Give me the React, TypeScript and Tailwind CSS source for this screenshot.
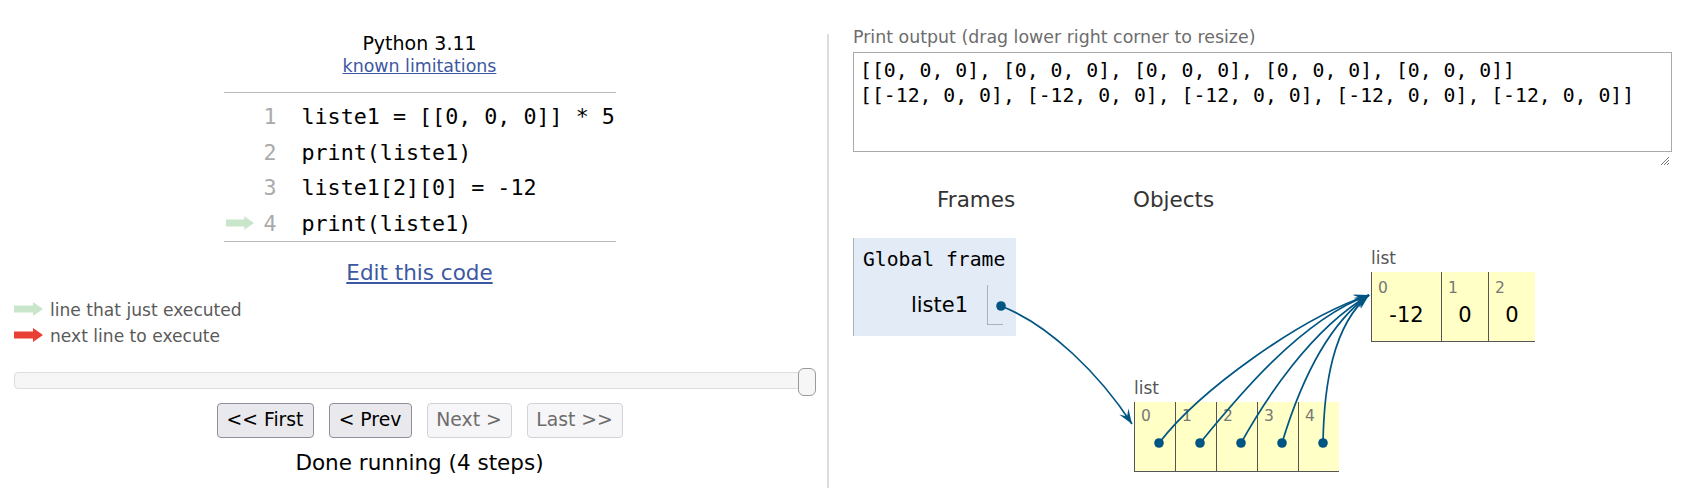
import React from "react";

type P = [number, number];

function headPath(p2: P, p3: P, L = 15, W = 11, fold = 0.6) {
  const dx = p3[0] - p2[0];
  const dy = p3[1] - p2[1];
  const len = Math.hypot(dx, dy);
  const ux = dx / len;
  const uy = dy / len;
  const nx = -uy;
  const ny = ux;
  const bx = p3[0] - L * ux;
  const by = p3[1] - L * uy;
  const w1 = [bx + (nx * W) / 2, by + (ny * W) / 2];
  const w2 = [bx - (nx * W) / 2, by - (ny * W) / 2];
  const f = [p3[0] - L * fold * ux, p3[1] - L * fold * uy];
  return `M${p3[0]},${p3[1]} L${w1[0]},${w1[1]} L${f[0]},${f[1]} L${w2[0]},${w2[1]} Z`;
}

const curves: { p0: P; p1: P; p2: P; p3: P }[] = [
  { p0: [1001, 306], p1: [1050, 325], p2: [1100, 375], p3: [1132, 424] },
  { p0: [1159, 443], p1: [1200, 390], p2: [1300, 318], p3: [1369, 295] },
  { p0: [1200, 443], p1: [1235, 400], p2: [1300, 320], p3: [1369, 295] },
  { p0: [1241, 443], p1: [1265, 400], p2: [1310, 330], p3: [1369, 295] },
  { p0: [1282, 443], p1: [1295, 400], p2: [1320, 330], p3: [1369, 295] },
  { p0: [1323, 443], p1: [1324, 385], p2: [1333, 325], p3: [1369, 295] },
];

const dots: P[] = [
  [1001, 306],
  [1159, 443],
  [1200, 443],
  [1241, 443],
  [1282, 443],
  [1323, 443],
];

function ExecArrow({ color }: { color: string }) {
  return (
    <svg width="29" height="14" viewBox="0 0 29 14" className="block">
      <path d="M0 3.5H19V0L29 7L19 14V10.5H0Z" fill={color} />
    </svg>
  );
}

const codeLines = [
  "liste1 = [[0, 0, 0]] * 5",
  "print(liste1)",
  "liste1[2][0] = -12",
  "print(liste1)",
];

export default function App() {
  return (
    <div className="relative w-[1694px] h-[488px] overflow-hidden bg-white flex font-['DejaVu_Sans',Verdana,sans-serif] text-black">
      {/* Left panel */}
      <div className="w-[827px] pl-[14px] pr-[2px] flex flex-col items-center pt-[32px]">
        <div className="text-[19px] leading-[22px] text-black">Python 3.11</div>
        <div className="mt-[2px] text-[17.4px] leading-[20px] text-[#3d58a2] underline">known limitations</div>

        <div className="mt-[16px] w-[392px] border-t border-b border-[#bbbbbb] pt-[6px]">
          {codeLines.map((line, i) => (
            <div key={i} className="flex items-center h-[35.5px]">
              <div className="w-[30px] pl-[2px] flex items-center">
                {i === 3 ? <ExecArrow color="#c9e6ca" /> : null}
              </div>
              <div className="w-[23px] text-right font-['DejaVu_Sans_Mono',monospace] text-[21.7px] leading-[35.5px] text-[#aaaaaa]">
                {i + 1}
              </div>
              <div className="pl-[25px] font-['DejaVu_Sans_Mono',monospace] text-[21.7px] leading-[35.5px] text-black whitespace-pre">
                {line}
              </div>
            </div>
          ))}
        </div>

        <div className="mt-[18px] text-[21.5px] leading-[25px] text-[#3d58a2] underline">Edit this code</div>

        <div className="self-start mt-[12px] text-[17.1px] leading-[26px] text-[#5a5a5a]">
          <div className="flex items-center gap-[7px]">
            <div className="-mt-[2px]">
              <ExecArrow color="#c9e6ca" />
            </div>
            <span>line that just executed</span>
          </div>
          <div className="flex items-center gap-[7px]">
            <div className="-mt-[2px]">
              <ExecArrow color="#e93f34" />
            </div>
            <span>next line to execute</span>
          </div>
        </div>

        <div className="self-start relative w-[802px] h-[28px] mt-[19px] pt-[4px]">
          <div className="h-[17px] rounded-[4px] border border-[#dddddd] bg-[#f6f6f6]" />
          <div className="absolute right-0 top-0 w-[18px] h-[28px] rounded-[6px] border border-[#9a9a9a] bg-[#f6f6f6]" />
        </div>

        <div className="mt-[7px] flex gap-[15px] text-[18.8px]">
          <div className="w-[97px] h-[35px] flex items-center justify-center rounded-[4px] border border-[#8f8f9d] bg-[#e9e9ed] text-black">
            &lt;&lt; First
          </div>
          <div className="w-[83px] h-[35px] flex items-center justify-center rounded-[4px] border border-[#8f8f9d] bg-[#e9e9ed] text-black">
            &lt; Prev
          </div>
          <div className="w-[85px] h-[35px] flex items-center justify-center rounded-[4px] border border-[#d2d2d8] bg-[#f6f6f8] text-[#6d6d6d]">
            Next &gt;
          </div>
          <div className="w-[96px] h-[35px] flex items-center justify-center rounded-[4px] border border-[#d2d2d8] bg-[#f6f6f8] text-[#6d6d6d]">
            Last &gt;&gt;
          </div>
        </div>

        <div className="mt-[12px] text-[21.5px] leading-[25px] text-black">Done running (4 steps)</div>
      </div>

      {/* Divider */}
      <div className="w-[2px] mt-[34px] h-[454px] bg-[#dddddd]" />

      {/* Right panel */}
      <div className="flex-1 pl-[24px] pt-[27px] flex flex-col">
        <div className="text-[17.4px] leading-[20px] text-[#6d6d6d]">Print output (drag lower right corner to resize)</div>
        <div className="relative mt-[5px] w-[819px] h-[100px] border border-[#aaaaaa] pl-[6px] pt-[5px] font-['DejaVu_Sans_Mono',monospace] text-[19.8px] leading-[25px] text-black whitespace-pre">
          <div>[[0, 0, 0], [0, 0, 0], [0, 0, 0], [0, 0, 0], [0, 0, 0]]</div>
          <div>[[-12, 0, 0], [-12, 0, 0], [-12, 0, 0], [-12, 0, 0], [-12, 0, 0]]</div>
          <svg className="absolute right-[1px] bottom-[-15px]" width="10" height="10" viewBox="0 0 10 10">
            <path d="M9 1L1 9M9 4L4 9M9 7L7 9" stroke="#777" strokeWidth="1" />
          </svg>
        </div>

        <div className="mt-[35px] flex">
          {/* Frames column */}
          <div className="w-[280px] flex flex-col">
            <div className="ml-[84px] text-[21.5px] leading-[25px] text-[#333333]">Frames</div>
            <div className="mt-[26px] w-[163px] h-[98px] bg-[#e2ebf6] border-l border-[#a6b3b6] pt-[10px] flex flex-col">
              <div className="pl-[9px] font-['DejaVu_Sans_Mono',monospace] text-[19.7px] leading-[24px] text-black">Global frame</div>
              <div className="mt-[13px] flex items-center justify-end pr-[13px]">
                <div className="text-[21px] leading-[25px] text-black">liste1</div>
                <div className="ml-[19px] w-[16px] h-[40px] border-l border-b border-[#a6b3b6]" />
              </div>
            </div>
          </div>

          {/* Objects column */}
          <div className="flex-1 flex flex-col">
            <div className="text-[21.5px] leading-[25px] text-[#333333]">Objects</div>
            <div className="relative h-[276px]">
              {/* inner list */}
              <div className="absolute left-[238px] top-[36px] flex flex-col">
                <div className="text-[17px] leading-[20px] text-[#555555]">list</div>
                <div className="mt-[4px] flex h-[70px] border-l border-b border-[#555555] bg-[#ffffc6]">
                  <div className="w-[70px] border-r border-[#555555] pt-[7px] flex flex-col">
                    <div className="pl-[6px] text-[15.5px] leading-[18px] text-[#777777]">0</div>
                    <div className="mt-[6px] text-center text-[21px] leading-[25px] text-black">-12</div>
                  </div>
                  <div className="w-[47px] border-r border-[#555555] pt-[7px] flex flex-col">
                    <div className="pl-[6px] text-[15.5px] leading-[18px] text-[#777777]">1</div>
                    <div className="mt-[6px] text-center text-[21px] leading-[25px] text-black">0</div>
                  </div>
                  <div className="w-[46px] pt-[7px] flex flex-col">
                    <div className="pl-[6px] text-[15.5px] leading-[18px] text-[#777777]">2</div>
                    <div className="mt-[6px] text-center text-[21px] leading-[25px] text-black">0</div>
                  </div>
                </div>
              </div>

              {/* outer list */}
              <div className="absolute left-[1px] top-[166px] flex flex-col">
                <div className="text-[17px] leading-[20px] text-[#555555]">list</div>
                <div className="mt-[4px] flex h-[70px] border-l border-b border-[#555555] bg-[#ffffc6]">
                  {[0, 1, 2, 3, 4].map((i) => (
                    <div
                      key={i}
                      className={
                        i < 4
                          ? "w-[41px] border-r border-[#555555] pt-[5px] pl-[6px] text-[15.5px] leading-[18px] text-[#777777]"
                          : "w-[40px] pt-[5px] pl-[6px] text-[15.5px] leading-[18px] text-[#777777]"
                      }
                    >
                      {i}
                    </div>
                  ))}
                </div>
              </div>
            </div>
          </div>
        </div>
      </div>

      {/* Arrow overlay */}
      <svg className="absolute left-0 top-0 pointer-events-none" width="1694" height="488" viewBox="0 0 1694 488">
        {curves.map((c, i) => (
          <g key={i}>
            <path
              d={`M${c.p0[0]},${c.p0[1]} C${c.p1[0]},${c.p1[1]} ${c.p2[0]},${c.p2[1]} ${c.p3[0]},${c.p3[1]}`}
              fill="none"
              stroke="#005583"
              strokeWidth="1.7"
            />
            <path d={headPath(c.p2, c.p3)} fill="#005583" />
          </g>
        ))}
        {dots.map((d, i) => (
          <circle key={i} cx={d[0]} cy={d[1]} r="4.8" fill="#005583" />
        ))}
      </svg>
    </div>
  );
}
